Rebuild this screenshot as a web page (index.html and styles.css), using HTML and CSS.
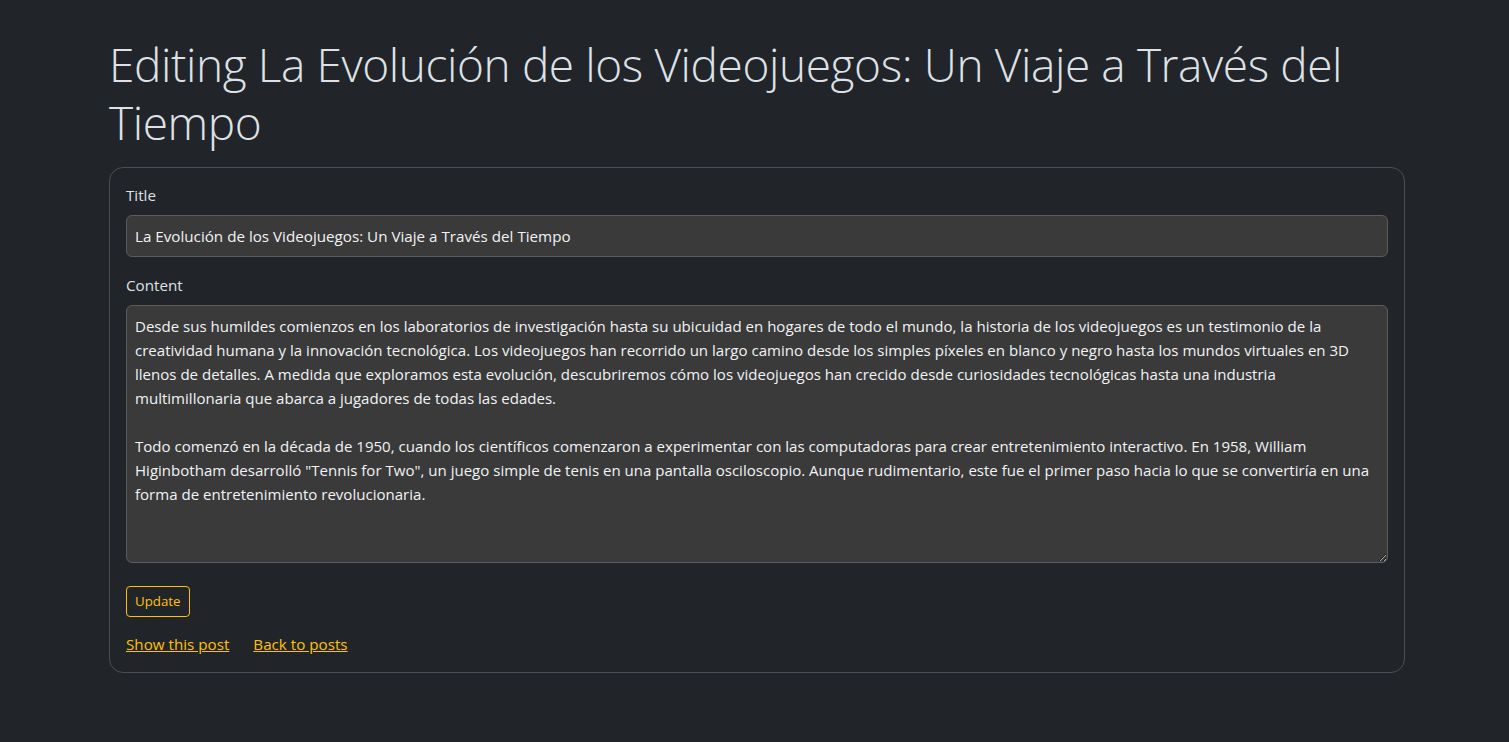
FILE: index.html
```html
<!DOCTYPE html>
<html lang="es">
<head>
<meta charset="utf-8">
<title>Editing post</title>
<link rel="stylesheet" href="styles.css">
</head>
<body>
<main class="container">
  <h1 class="page-title">Editing La Evolución de los Videojuegos: Un Viaje a Través del Tiempo</h1>
  <div class="card">
    <form class="post-form">
      <div class="field">
        <label class="form-label" for="post_title">Title</label>
        <input class="form-control" type="text" id="post_title" value="La Evolución de los Videojuegos: Un Viaje a Través del Tiempo">
      </div>
      <div class="field field-content">
        <label class="form-label" for="post_content">Content</label>
        <textarea class="form-control textarea" id="post_content">Desde sus humildes comienzos en los laboratorios de investigación hasta su ubicuidad en hogares de todo el mundo, la historia de los videojuegos es un testimonio de la creatividad humana y la innovación tecnológica. Los videojuegos han recorrido un largo camino desde los simples píxeles en blanco y negro hasta los mundos virtuales en 3D llenos de detalles. A medida que exploramos esta evolución, descubriremos cómo los videojuegos han crecido desde curiosidades tecnológicas hasta una industria multimillonaria que abarca a jugadores de todas las edades.

Todo comenzó en la década de 1950, cuando los científicos comenzaron a experimentar con las computadoras para crear entretenimiento interactivo. En 1958, William Higinbotham desarrolló "Tennis for Two", un juego simple de tenis en una pantalla osciloscopio. Aunque rudimentario, este fue el primer paso hacia lo que se convertiría en una forma de entretenimiento revolucionaria.</textarea>
      </div>
      <div class="actions">
        <button type="button" class="btn-update">Update</button>
      </div>
    </form>
    <nav class="links">
      <a href="#" class="link">Show this post</a>
      <a href="#" class="link">Back to posts</a>
    </nav>
  </div>
</main>
</body>
</html>
```
FILE: styles.css
```css
* { box-sizing: border-box; }
html, body {
  margin: 0;
  background: #212529;
  color: #dee2e6;
  font-family: "Open Sans", "Noto Sans", sans-serif;
  font-size: 15.2px;
  line-height: 24px;
}
.container {
  margin: 0 104px 0 109px;
  padding-top: 36px;
}
.page-title {
  margin: 0 0 16px 0;
  font-size: 46px;
  font-weight: 300;
  letter-spacing: -0.4px;
  line-height: 57.6px;
  color: #dee2e6;
}
.card {
  border: 1px solid #4a4f55;
  border-radius: 14px;
  padding: 15px 16px 16px 16px;
}
.field { margin-bottom: 16px; }
.field-content { margin-bottom: 23px; }
.form-label {
  display: block;
  margin-bottom: 8px;
  color: #dee2e6;
}
.form-control {
  display: block;
  width: 100%;
  margin: 0;
  font-family: inherit;
  font-size: 15.2px;
  line-height: 24px;
  color: #f1f3f5;
  background: #3a3a3a;
  border: 1px solid #5c5c5c;
  border-radius: 6px;
  padding: 8px;
  height: 42px;
  outline: none;
}
.textarea {
  font-size: 15.05px;
  height: 258px;
  resize: vertical;
}
.actions { margin-bottom: 15px; }
.btn-update {
  font-family: inherit;
  font-size: 13.3px;
  line-height: 21px;
  padding: 4px 8px;
  color: #ffc107;
  background: transparent;
  border: 1px solid #ffc107;
  border-radius: 4px;
  cursor: pointer;
}
.links {
  display: flex;
  gap: 24px;
}
.link {
  color: #ffc107;
  text-decoration: underline;
}
```
